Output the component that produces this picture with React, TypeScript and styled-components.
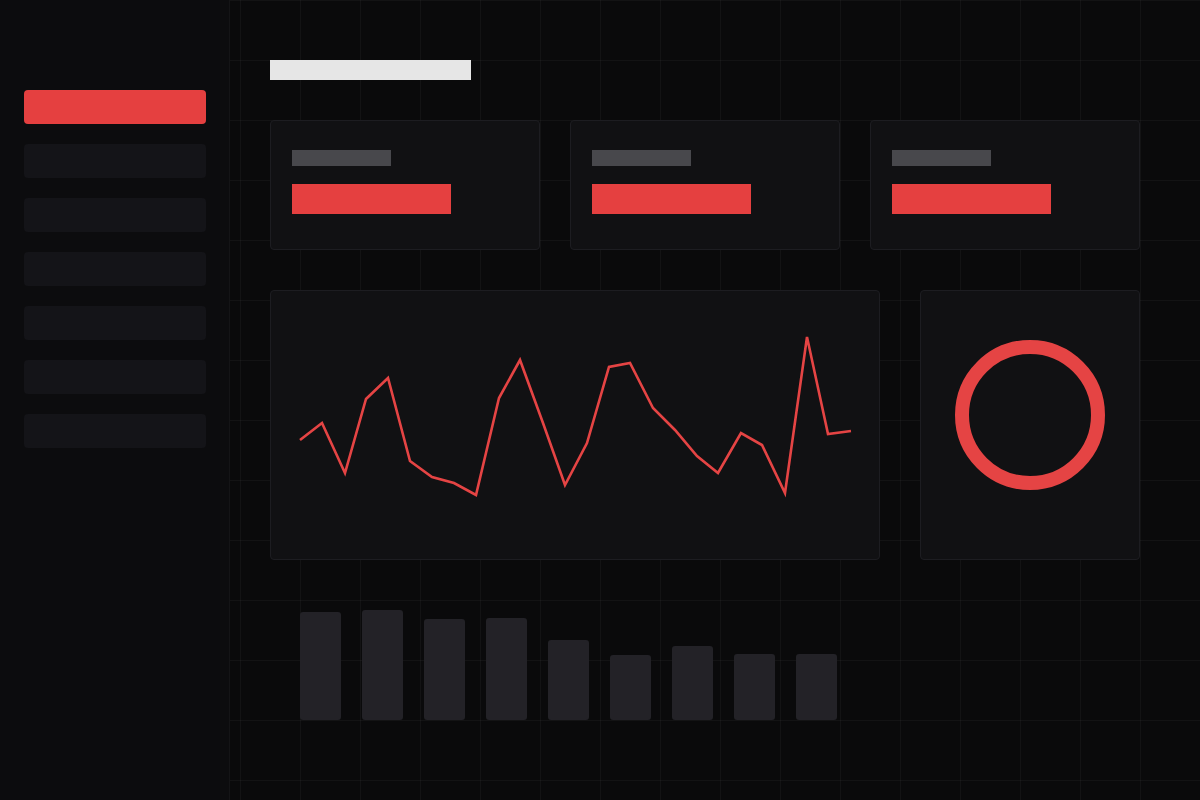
import styled, { createGlobalStyle } from "styled-components";

const GlobalStyle = createGlobalStyle`
	html, body {
		margin: 0;
		padding: 0;
		background-color: #0a0a0b;
		font-family: "Inter", "Liberation Sans", sans-serif;
	}
	#root {
		min-height: 100vh;
	}
`;

const Page = styled.div`
	display: flex;
	width: 1200px;
	height: 800px;
	overflow: hidden;
	background-color: #0a0a0b;
	background-image:
		linear-gradient(to right, rgba(255, 255, 255, 0.035) 1px, transparent 1px),
		linear-gradient(to bottom, rgba(255, 255, 255, 0.035) 1px, transparent 1px);
	background-size: 60px 60px;
`;

const Sidebar = styled.aside`
	width: 230px;
	flex-shrink: 0;
	box-sizing: border-box;
	padding: 90px 23px 0 24px;
	background-color: #0c0c0e;
	border-right: 1px solid #141416;
	display: flex;
	flex-direction: column;
	gap: 20px;
`;

const NavItem = styled.div<{ $active?: boolean }>`
	height: 34px;
	border-radius: 4px;
	background-color: ${(p) => (p.$active ? "#e54040" : "#141418")};
`;

const Main = styled.main`
	flex: 1;
	box-sizing: border-box;
	padding: 60px 0 0 40px;
	display: flex;
	flex-direction: column;
`;

const Title = styled.div`
	width: 201px;
	height: 20px;
	background-color: #e6e6e6;
	margin-bottom: 40px;
`;

const StatRow = styled.div`
	display: grid;
	grid-template-columns: repeat(3, 270px);
	gap: 30px;
	margin-bottom: 40px;
`;

const Card = styled.div`
	box-sizing: border-box;
	background-color: #111113;
	border: 1px solid #1d1d21;
	border-radius: 4px;
`;

const StatCard = styled(Card)`
	height: 130px;
	padding: 29px 21px;
	display: flex;
	flex-direction: column;
	gap: 18px;
`;

const Label = styled.div`
	width: 99px;
	height: 16px;
	background-color: #48484c;
`;

const Value = styled.div`
	width: 159px;
	height: 30px;
	background-color: #e54040;
`;

const ChartRow = styled.div`
	display: flex;
	gap: 40px;
	height: 270px;
`;

const LineCard = styled(Card)`
	width: 610px;
	overflow: hidden;
`;

const DonutCard = styled(Card)`
	width: 220px;
	padding-bottom: 20px;
	display: flex;
	align-items: center;
	justify-content: center;
`;

const Bars = styled.div`
	height: 160px;
	padding: 0 30px;
	display: flex;
	align-items: flex-end;
	gap: 21px;
`;

const Bar = styled.div`
	width: 41px;
	background-color: #232227;
	border-radius: 3px;
`;

const points: [number, number][] = [
	[300, 440], [322, 423], [345, 473], [366, 399], [388, 378], [410, 461],
	[432, 477], [454, 483], [476, 495], [499, 398], [520, 360], [543, 423],
	[565, 485], [587, 443], [609, 367], [630, 363], [653, 408], [675, 430],
	[697, 456], [718, 473], [741, 433], [762, 445], [785, 493], [807, 337],
	[828, 434], [851, 431],
];

const barHeights = [108, 110, 101, 102, 80, 65, 74, 66, 66];

export default function App() {
	// svg origin sits inside the card border, at (271, 291) on the page
	const path = points.map(([x, y]) => `${x - 271},${y - 291}`).join(" ");

	return (
		<>
			<GlobalStyle />
			<Page>
				<Sidebar>
					<NavItem $active />
					{Array.from({ length: 6 }).map((_, i) => (
						<NavItem key={`nav_${i}`} />
					))}
				</Sidebar>
				<Main>
					<Title />
					<StatRow>
						{[0, 1, 2].map((i) => (
							<StatCard key={`stat_${i}`}>
								<Label />
								<Value />
							</StatCard>
						))}
					</StatRow>
					<ChartRow>
						<LineCard>
							<svg width="608" height="268" viewBox="0 0 608 268">
								<polyline
									points={path}
									fill="none"
									stroke="#e54444"
									strokeWidth="2.6"
									strokeLinejoin="miter"
								/>
							</svg>
						</LineCard>
						<DonutCard>
							<svg width="152" height="152" viewBox="0 0 152 152">
								<circle cx="76" cy="76" r="68" fill="none" stroke="#e54444" strokeWidth="14" />
							</svg>
						</DonutCard>
					</ChartRow>
					<Bars>
						{barHeights.map((h, i) => (
							<Bar key={`bar_${i}`} style={{ height: h }} />
						))}
					</Bars>
				</Main>
			</Page>
		</>
	);
}
